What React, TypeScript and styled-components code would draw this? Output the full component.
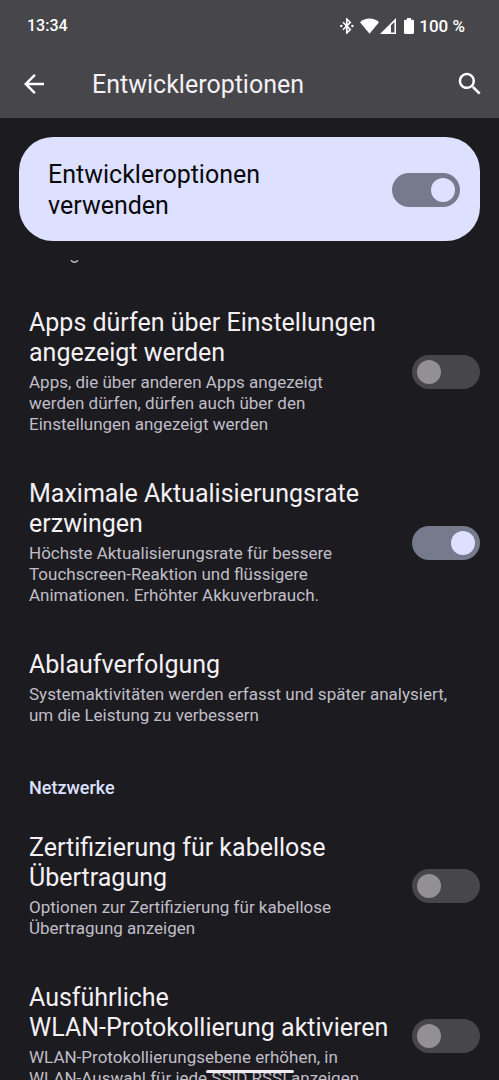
import React, { useState } from "react";
import styled, { createGlobalStyle } from "styled-components";

const color = {
  background: "#1c1b1f",
  header: "#47464a",
  accent: "#dde1ff",
  track: "#757a8c",
  trackOff: "#47464a",
  thumbOff: "#929095",
  title: "#f4f0f5",
  summary: "#c0bec8",
  white: "#ffffff",
};

const GlobalStyle = createGlobalStyle`
  *, *::before, *::after { box-sizing: border-box; }
  body {
    margin: 0;
    background: ${color.background};
    color: ${color.title};
    font-family: Roboto, "Liberation Sans", sans-serif;
  }
`;

const Screen = styled.div`
  display: flex;
  flex-direction: column;
  height: 100vh;
  overflow: hidden;
`;

const Header = styled.header`
  flex: none;
  background: ${color.header};
`;

const StatusBar = styled.div`
  display: flex;
  align-items: center;
  justify-content: space-between;
  height: 50px;
  padding: 2px 34px 0 27px;
  font-weight: 500;
  line-height: 20px;
  color: ${color.white};
`;

const Clock = styled.time`
  font-size: 16px;
`;

const BatteryLevel = styled.span`
  font-size: 17px;
`;

const StatusIcons = styled.div`
  display: flex;
  align-items: center;
`;

const StatusIcon = styled.svg<{ $gap: number }>`
  display: block;
  margin-right: ${(p) => p.$gap}px;
`;

const AppBar = styled.div`
  display: flex;
  align-items: center;
  height: 68px;
  padding: 0 14px 0 19px;
`;

const IconButton = styled.button`
  display: block;
  padding: 0;
  border: 0;
  background: none;
  color: ${color.white};
  cursor: pointer;

  svg {
    display: block;
  }
`;

const PageTitle = styled.h1`
  flex: 1;
  margin: 0 0 0 43px;
  padding-top: 2px;
  font-size: 25px;
  font-weight: 400;
  line-height: 30px;
`;

const MainSwitch = styled.label`
  flex: none;
  display: flex;
  align-items: center;
  justify-content: space-between;
  margin: 19px 19px 0;
  padding: 22px 20px 20px 29px;
  border-radius: 34px;
  background: ${color.accent};
  color: #09090d;
  font-size: 25px;
  line-height: 31px;
  cursor: pointer;
`;

const MainSwitchText = styled.span`
  max-width: 260px;
`;

const Toggle = styled.input`
  appearance: none;
  flex: none;
  display: flex;
  align-items: center;
  width: 68px;
  height: 34px;
  margin: 0;
  padding: 0 5px;
  border-radius: 17px;
  background: ${color.trackOff};
  cursor: pointer;

  &::before {
    content: "";
    width: 24px;
    height: 24px;
    border-radius: 50%;
    background: ${color.thumbOff};
  }

  &:checked {
    justify-content: flex-end;
    background: ${color.track};
  }

  &:checked::before {
    background: ${color.accent};
  }
`;

const Preferences = styled.main`
  flex: 1;
  min-height: 0;
  margin-top: 19px;
  overflow-y: auto;
  scrollbar-width: none;
`;

const ScrolledRow = styled.div`
  height: 24px;
  padding-left: 70px;

  svg {
    display: block;
  }
`;

const Row = styled.label`
  display: flex;
  align-items: center;
  justify-content: space-between;
  gap: 20px;
  padding: 24px 19px 20px 29px;
  cursor: pointer;
`;

const RowText = styled.span`
  display: flex;
  flex: 1;
  flex-direction: column;
  gap: 4px;
  min-width: 0;
`;

const RowTitle = styled.span`
  font-size: 25px;
  line-height: 30px;
`;

const RowSummary = styled.span<{ $narrow?: boolean }>`
  max-width: ${(p) => (p.$narrow ? "345px" : "440px")};
  color: ${color.summary};
  font-size: 17px;
  line-height: 21px;
`;

const Category = styled.h2`
  margin: 0;
  padding: 31px 29px 10px;
  color: ${color.accent};
  font-size: 18px;
  font-weight: 500;
  line-height: 22px;
`;

const GestureBar = styled.div`
  position: fixed;
  bottom: 7px;
  left: 50%;
  width: 88px;
  height: 3px;
  border-radius: 2px;
  background: #f3edf4;
  transform: translateX(-50%);
`;

type PreferenceProps = { title: string; summary: string; initial?: boolean };

function SwitchPreference({ title, summary, initial = false }: PreferenceProps) {
  const [on, setOn] = useState(initial);
  return (
    <Row>
      <RowText>
        <RowTitle>{title}</RowTitle>
        <RowSummary $narrow>{summary}</RowSummary>
      </RowText>
      <Toggle type="checkbox" role="switch" checked={on} onChange={() => setOn(!on)} />
    </Row>
  );
}

function Preference({ title, summary }: PreferenceProps) {
  return (
    <Row as="div">
      <RowText>
        <RowTitle>{title}</RowTitle>
        <RowSummary>{summary}</RowSummary>
      </RowText>
    </Row>
  );
}

export default function App() {
  const [enabled, setEnabled] = useState(true);
  return (
    <>
      <GlobalStyle />
      <Screen>
        <Header>
          <StatusBar>
            <Clock>13:34</Clock>
            <StatusIcons>
              <StatusIcon $gap={6} width="14" height="16" viewBox="0 0 14 16" aria-hidden="true">
                <path
                  d="M3 4.300l7.300 7.300L6.800 15V1l3.500 3.400L3 11.700"
                  fill="none"
                  stroke="#fff"
                  strokeWidth="1.600"
                />
                <circle cx="1.300" cy="8" r="1.200" fill="#fff" />
                <circle cx="12.400" cy="8" r="1.200" fill="#fff" />
              </StatusIcon>
              <StatusIcon $gap={1} width="19" height="16" viewBox="0 0 19 16" aria-hidden="true">
                <path d="M0 4.300C2.600 1.900 5.900.600 9.500.600S16.400 1.900 19 4.300L9.500 15.700z" fill="#fff" />
              </StatusIcon>
              <StatusIcon $gap={8} width="16" height="16" viewBox="0 0 16 16" aria-hidden="true">
                <path
                  d="M16 0v16H0zM14.400 3.900l-3.400 3.400v7.100h3.400z"
                  fill="#fff"
                  fillRule="evenodd"
                />
              </StatusIcon>
              <StatusIcon $gap={5} width="10" height="16" viewBox="0 0 10 16" aria-hidden="true">
                <path
                  d="M3 0h4v1.700h1.800c.7 0 1.200.5 1.200 1.200v11.900c0 .7-.5 1.200-1.200 1.200H1.200C.5 16 0 15.500 0 14.800V2.900c0-.7.5-1.200 1.200-1.200H3z"
                  fill="#fff"
                />
              </StatusIcon>
              <BatteryLevel>100 %</BatteryLevel>
            </StatusIcons>
          </StatusBar>
          <AppBar>
            <IconButton type="button" aria-label="Zurück">
              <svg width="30" height="30" viewBox="0 0 24 24" fill="currentColor">
                <path d="M20 11H7.830l5.590-5.590L12 4l-8 8 8 8 1.410-1.410L7.830 13H20v-2z" />
              </svg>
            </IconButton>
            <PageTitle>Entwickleroptionen</PageTitle>
            <IconButton type="button" aria-label="Suchen">
              <svg width="30" height="30" viewBox="0 0 24 24" fill="currentColor">
                <path d="M15.500 14h-.790l-.280-.270C15.410 12.590 16 11.110 16 9.500 16 5.910 13.090 3 9.500 3S3 5.910 3 9.500 5.910 16 9.500 16c1.610 0 3.090-.590 4.230-1.570l.270.280v.790l5 4.990L20.490 19l-4.990-5zm-6 0C7.010 14 5 11.990 5 9.500S7.010 5 9.500 5 14 7.010 14 9.500 11.990 14 9.500 14z" />
              </svg>
            </IconButton>
          </AppBar>
        </Header>

        <MainSwitch>
          <MainSwitchText>Entwickleroptionen verwenden</MainSwitchText>
          <Toggle
            type="checkbox"
            role="switch"
            checked={enabled}
            onChange={() => setEnabled(!enabled)}
          />
        </MainSwitch>

        <Preferences>
          <ScrolledRow>
            <svg width="9" height="4" viewBox="0 0 9 4" aria-hidden="true">
              <path
                d="M1 0.200C2.300 2.800 6.600 2.800 7.900 0.200"
                fill="none"
                stroke={color.summary}
                strokeWidth="1.500"
              />
            </svg>
          </ScrolledRow>
          <SwitchPreference
            title="Apps dürfen über Einstellungen angezeigt werden"
            summary="Apps, die über anderen Apps angezeigt werden dürfen, dürfen auch über den Einstellungen angezeigt werden"
          />
          <SwitchPreference
            title="Maximale Aktualisierungsrate erzwingen"
            summary="Höchste Aktualisierungsrate für bessere Touchscreen-Reaktion und flüssigere Animationen. Erhöhter Akkuverbrauch."
            initial
          />
          <Preference
            title="Ablaufverfolgung"
            summary="Systemaktivitäten werden erfasst und später analysiert, um die Leistung zu verbessern"
          />
          <Category>Netzwerke</Category>
          <SwitchPreference
            title="Zertifizierung für kabellose Übertragung"
            summary="Optionen zur Zertifizierung für kabellose Übertragung anzeigen"
          />
          <SwitchPreference
            title="Ausführliche WLAN‑Protokollierung aktivieren"
            summary="WLAN-Protokollierungsebene erhöhen, in WLAN‑Auswahl für jede SSID RSSI anzeigen"
          />
        </Preferences>
      </Screen>
      <GestureBar />
    </>
  );
}
